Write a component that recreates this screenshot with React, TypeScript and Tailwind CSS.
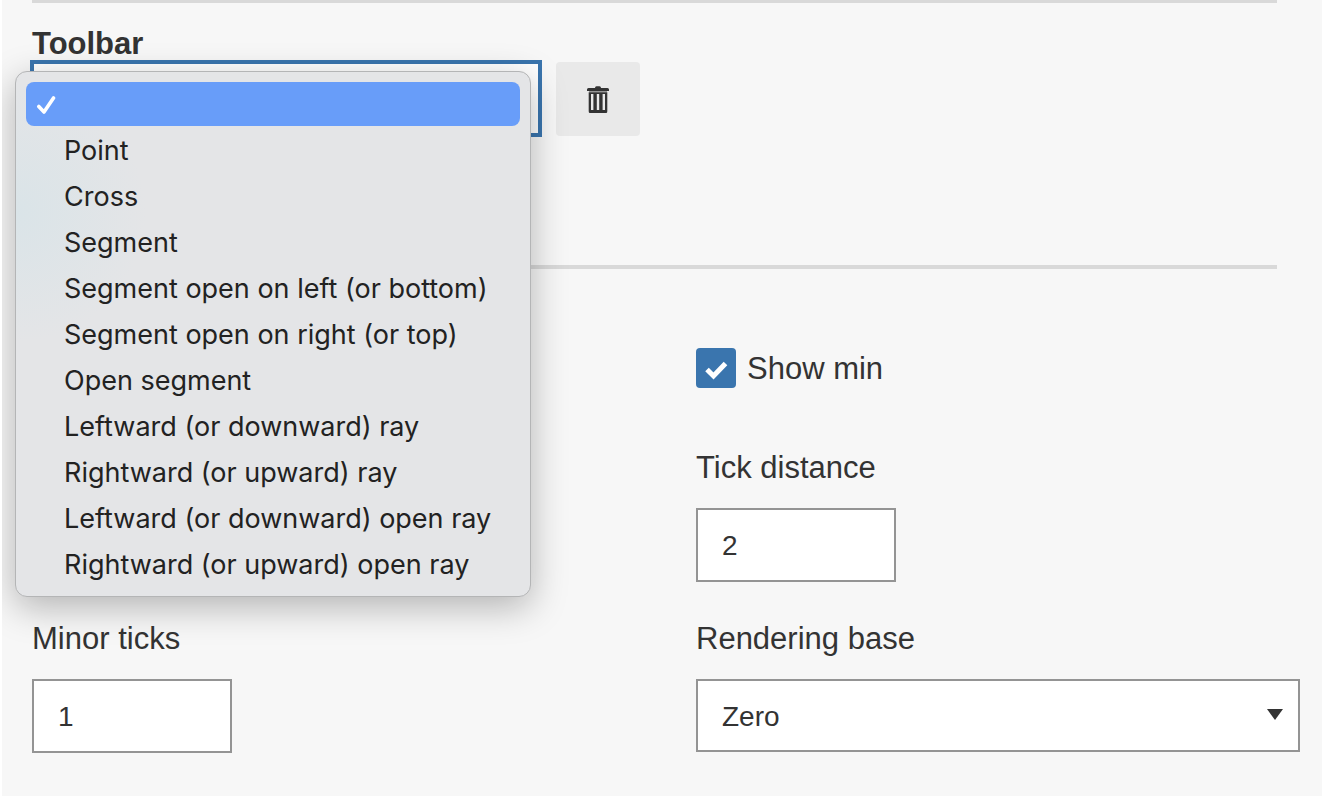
import type { ReactNode } from "react";

const tools = [
  "Point",
  "Cross",
  "Segment",
  "Segment open on left (or bottom)",
  "Segment open on right (or top)",
  "Open segment",
  "Leftward (or downward) ray",
  "Rightward (or upward) ray",
  "Leftward (or downward) open ray",
  "Rightward (or upward) open ray",
];

function TrashIcon() {
  return (
    <svg width="24" height="28" viewBox="0 0 24 28" fill="#333" aria-hidden="true">
      <path d="M9 3q0-1.700 1.500-1.700h3Q15 1.300 15 3h6.500Q23 3 23 4.500V6H1V4.500Q1 3 2.500 3z" />
      <path d="M3 6h18v1.200H3z" opacity=".45" />
      <path
        fillRule="evenodd"
        d="M2.700 7.200h18.600v19q0 2-2 2H4.700q-2 0-2-2zM5 9v16h2.400V9zM10.800 9v16h2.400V9zM16.600 9v16H19V9z"
      />
    </svg>
  );
}

function ToolMenu() {
  return (
    <div
      role="listbox"
      aria-label="Tools"
      className="absolute top-[9px] -left-[17px] z-10 flex w-[516px] flex-col rounded-xl border border-[#b4b5b6] bg-[#e4e5e7] bg-[radial-gradient(circle_at_0_140px,#dae4e8,#e4e5e7_130px)] px-[10px] pt-[10px] pb-[9px] font-[Inter,sans-serif] text-[27px] text-[#222] shadow-[0_10px_36px_rgba(0,0,0,0.28)]"
    >
      <button
        type="button"
        role="option"
        aria-selected="true"
        aria-label="None"
        className="mb-px flex h-11 items-center rounded-lg bg-[#689df9] px-[10px]"
      >
        <svg width="20" height="20" viewBox="0 0 20 20" fill="none" stroke="#fff" strokeWidth="3.600" strokeLinecap="round" strokeLinejoin="round" aria-hidden="true">
          <path d="M2.800 12.500 8 18 17.500 4" />
        </svg>
      </button>
      {tools.map((tool) => (
        <button
          key={tool}
          type="button"
          role="option"
          aria-selected="false"
          className="h-[46px] pt-0.5 pl-[38px] text-left whitespace-nowrap"
        >
          {tool}
        </button>
      ))}
    </div>
  );
}

function Field({ id, label, children }: { id: string; label: string; children: ReactNode }) {
  return (
    <div className="flex flex-col items-start gap-5">
      <label htmlFor={id} className="leading-[40px]">
        {label}
      </label>
      {children}
    </div>
  );
}

const inputClass =
  "h-[74px] w-[200px] border-2 border-[#949494] bg-white px-6 pt-0.5 text-[28px] outline-none";

export default function App() {
  return (
    <div className="min-h-screen bg-white pl-0.5">
      <main className="min-h-screen overflow-hidden bg-[#f7f7f7] pr-[22px] pl-[30px] font-['Liberation_Sans',sans-serif] text-[31px] text-[#333]">
        <section className="mr-[23px] h-[269px] border-t-[3px] border-b-4 border-[#d9d9d9] pt-[22px]">
          <label htmlFor="toolbar" className="block h-[37px] leading-[37px] font-bold">
            Toolbar
          </label>
          <div className="relative flex gap-4">
            <select
              id="toolbar"
              className="h-[73px] w-[508px] appearance-none border-2 border-[#3a75ae] bg-white ring-2 ring-[#3a75ae] outline-none"
            >
              <option value=""></option>
              {tools.map((tool) => (
                <option key={tool}>{tool}</option>
              ))}
            </select>
            <button
              type="button"
              aria-label="Delete"
              className="flex h-[74px] w-[84px] items-center justify-center rounded bg-[#e9e9e9]"
            >
              <TrashIcon />
            </button>
            <ToolMenu />
          </div>
        </section>

        <div className="grid grid-cols-2 gap-x-[60px] gap-y-[37px] pt-[79px]">
          <div className="col-start-2 mb-[23px] flex items-center gap-[11px]">
            <span className="relative flex">
              <input
                id="show-min"
                type="checkbox"
                defaultChecked
                className="size-10 appearance-none rounded bg-[#3a75ae]"
              />
              <svg className="pointer-events-none absolute inset-0" width="40" height="40" viewBox="0 0 40 40" fill="none" stroke="#fff" strokeWidth="5" aria-hidden="true">
                <path d="M11 21.500 17.500 28 29.500 15.500" />
              </svg>
            </span>
            <label htmlFor="show-min" className="pt-0.5 leading-[38px]">
              Show min
            </label>
          </div>
          <div className="col-start-2">
            <Field id="tick-distance" label="Tick distance">
              <input id="tick-distance" type="text" defaultValue="2" className={inputClass} />
            </Field>
          </div>
          <Field id="minor-ticks" label="Minor ticks">
            <input id="minor-ticks" type="text" defaultValue="1" className={inputClass} />
          </Field>
          <Field id="rendering-base" label="Rendering base">
            <div className="relative w-full">
              <select
                id="rendering-base"
                defaultValue="Zero"
                className="block h-[73px] w-full appearance-none border-2 border-[#949494] bg-white px-6 pt-0.5 text-[28px] outline-none"
              >
                <option>Zero</option>
              </select>
              <svg className="pointer-events-none absolute top-[30px] right-[17px]" width="16" height="12" viewBox="0 0 16 12" fill="#333" aria-hidden="true">
                <path d="M0 0h16L8 11z" />
              </svg>
            </div>
          </Field>
        </div>
      </main>
    </div>
  );
}
